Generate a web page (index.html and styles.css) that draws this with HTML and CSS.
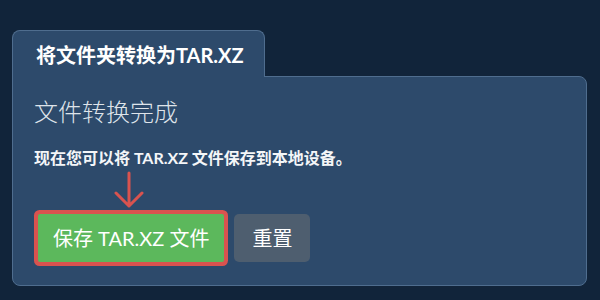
FILE: index.html
```html
<!DOCTYPE html>
<html>
<head>
  <title>将文件夹转换为TAR.XZ</title>
  <link rel="stylesheet" href="styles.css">
</head>
<body>
  <div class="card">
    <div class="tab">将文件夹转换为TAR.XZ</div>

    <div class="panel">
      <h2 class="done-title">文件转换完成</h2>
      <p class="done-text">现在您可以将 TAR.XZ 文件保存到本地设备。</p>

      <div class="buttons">
        <div class="save-wrap">
          <!-- pointer to the save button -->
          <svg class="arrow" width="30" height="44" viewBox="0 0 30 44">
            <path d="M15 3 L15 36 M2 23 L15 36 L28 23" fill="none" stroke="#d9534f" stroke-width="3" stroke-linecap="round" stroke-linejoin="round"/>
          </svg>
          <button class="btn btn-save">保存 TAR.XZ 文件</button>
        </div>
        <button class="btn btn-reset">重置</button>
      </div>
    </div>
  </div>
</body>
</html>
```

FILE: styles.css
```css
    body {
      margin: 0;
      padding: 30px 13px 14px 12px;
      background-color: #11243a;
      font-family: Lato, "Noto Sans CJK SC", sans-serif;
      color: #ffffff;
    }

    .card {
      display: flex;
      flex-direction: column;
      align-items: flex-start;
    }

    .tab {
      position: relative;
      z-index: 1;
      margin-bottom: -1px;
      padding: 10px 20px 8px 23px;
      white-space: nowrap;
      line-height: 28px;
      font-size: 20px;
      font-weight: bold;
      background-color: #2d4a6b;
      border: 1px solid #4f6d8e;
      border-bottom: none;
      border-radius: 8px 8px 0 0;
    }

    .panel {
      align-self: stretch;
      padding: 19px 21px 23px 21px;
      background-color: #2d4a6b;
      border: 1px solid #4f6d8e;
      border-radius: 0 8px 8px 8px;
    }

    .done-title {
      margin: 0;
      font-size: 24px;
      line-height: 32px;
      font-weight: 300;
      color: #dfe4ea;
    }

    .done-text {
      margin: 18px 0 0 0;
      font-size: 16px;
      line-height: 24px;
      font-weight: bold;
      color: #f4f6f8;
    }

    .buttons {
      display: flex;
      align-items: flex-end;
      gap: 10px;
    }

    .save-wrap {
      display: flex;
      flex-direction: column;
      align-items: center;
    }

    .arrow {
      display: block;
    }

    .btn {
      font-family: Lato, "Noto Sans CJK SC", sans-serif;
      font-size: 20px;
      line-height: 28px;
      padding: 10px 15px;
      color: #ffffff;
      border: none;
      cursor: pointer;
    }

    .btn-save {
      margin-left: 4px;
      background-color: #5cb85c;
      border-radius: 2px;
      box-shadow: 0 0 0 4px #d9534f;
    }

    .btn-reset {
      padding: 10px 18px;
      background-color: #4e5e6f;
      border-radius: 5px;
    }
```
